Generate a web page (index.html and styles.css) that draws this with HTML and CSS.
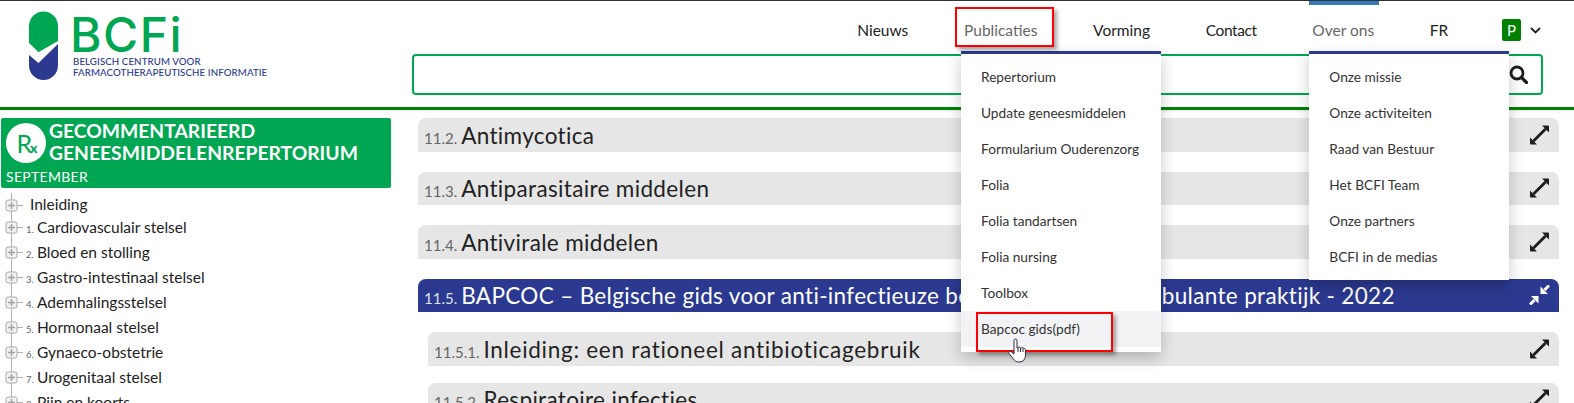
FILE: index.html
```html
<!DOCTYPE html>
<html lang="nl">
<head>
<meta charset="utf-8">
<title>BCFI</title>
<link rel="stylesheet" href="styles.css">
</head>
<body>
<div class="page">
  <header class="header">
    <a class="logo">
      <svg class="logo-mark" width="30" height="70" viewBox="0 0 30 70">
        <path fill="#00a651" d="M0 15A14.5 14.5 0 0 1 29 15V30L9.5 41 0 32Z"/>
        <path fill="#00a651" d="M0 31 9.5 41 29 29V15H0Z"/>
        <path fill="#2b3990" d="M0 44 9.5 52 29 33V54.500A14.500 14.500 0 0 1 0 54.500Z"/>
      </svg>
      <div class="logo-text">
        <div class="logo-name">BCFi</div>
        <div class="logo-sub">BELGISCH CENTRUM VOOR</div>
        <div class="logo-sub">FARMACOTHERAPEUTISCHE INFORMATIE</div>
      </div>
    </a>
    <div class="header-right">
      <nav class="nav">
        <a class="nav-item">Nieuws</a>
        <div class="nav-item nav-muted has-menu">
          <span>Publicaties</span>
          <ul class="menu">
            <li>Repertorium</li>
            <li>Update geneesmiddelen</li>
            <li>Formularium Ouderenzorg</li>
            <li>Folia</li>
            <li>Folia tandartsen</li>
            <li>Folia nursing</li>
            <li>Toolbox</li>
            <li class="menu-hover">Bapcoc gids(pdf)</li>
          </ul>
          <div class="mark mark-nav"></div>
        </div>
        <a class="nav-item">Vorming</a>
        <a class="nav-item nav-tight">Contact</a>
        <div class="nav-item nav-muted has-menu nav-open">
          <span>Over ons</span>
          <ul class="menu">
            <li>Onze missie</li>
            <li>Onze activiteiten</li>
            <li>Raad van Bestuur</li>
            <li>Het BCFI Team</li>
            <li>Onze partners</li>
            <li>BCFI in de medias</li>
          </ul>
        </div>
        <a class="nav-item">FR</a>
        <div class="user">
          <span class="user-badge">P</span>
          <svg width="11" height="7" viewBox="0 0 11 7"><path d="M1 1l4.500 4.500L10 1" fill="none" stroke="#222" stroke-width="1.800"/></svg>
        </div>
      </nav>
      <div class="search">
        <svg width="19" height="19" viewBox="0 0 19 19"><circle cx="8" cy="8" r="6" fill="none" stroke="#1d1d1d" stroke-width="2.800"/><path d="M12.500 12.500 17.500 17.500" stroke="#1d1d1d" stroke-width="3.200" stroke-linecap="round"/></svg>
      </div>
    </div>
  </header>

  <div class="body">
    <aside class="sidebar">
      <div class="rep">
        <div class="rep-head">
          <div class="rep-icon"><span class="rep-r">R</span><span class="rep-x">x</span></div>
          <div class="rep-title">GECOMMENTARIEERD<br>GENEESMIDDELENREPERTORIUM</div>
        </div>
        <div class="rep-month">SEPTEMBER</div>
      </div>
      <ul class="tree">
        <li class="tree-row tree-first"><svg class="tw" width="24" height="23" viewBox="0 0 24 23"><use href="#twig"/></svg><span class="tree-intro">Inleiding</span></li>
        <li class="tree-row"><svg class="tw" width="24" height="25" viewBox="0 0 24 25"><use href="#twig"/></svg><small>1.</small><span>Cardiovasculair stelsel</span></li>
        <li class="tree-row"><svg class="tw" width="24" height="25" viewBox="0 0 24 25"><use href="#twig"/></svg><small>2.</small><span>Bloed en stolling</span></li>
        <li class="tree-row"><svg class="tw" width="24" height="25" viewBox="0 0 24 25"><use href="#twig"/></svg><small>3.</small><span>Gastro-intestinaal stelsel</span></li>
        <li class="tree-row"><svg class="tw" width="24" height="25" viewBox="0 0 24 25"><use href="#twig"/></svg><small>4.</small><span>Ademhalingsstelsel</span></li>
        <li class="tree-row"><svg class="tw" width="24" height="25" viewBox="0 0 24 25"><use href="#twig"/></svg><small>5.</small><span>Hormonaal stelsel</span></li>
        <li class="tree-row"><svg class="tw" width="24" height="25" viewBox="0 0 24 25"><use href="#twig"/></svg><small>6.</small><span>Gynaeco-obstetrie</span></li>
        <li class="tree-row"><svg class="tw" width="24" height="25" viewBox="0 0 24 25"><use href="#twig"/></svg><small>7.</small><span>Urogenitaal stelsel</span></li>
        <li class="tree-row"><svg class="tw" width="24" height="25" viewBox="0 0 24 25"><use href="#twig"/></svg><small>8.</small><span>Pijn en koorts</span></li>
      </ul>
    </aside>

    <main class="main">
      <div class="bar"><span class="num">11.2.</span><span class="title">Antimycotica</span><svg class="ico" width="21" height="20" viewBox="0 0 20 20"><use href="#expand"/></svg></div>
      <div class="bar"><span class="num">11.3.</span><span class="title">Antiparasitaire middelen</span><svg class="ico" width="21" height="20" viewBox="0 0 20 20"><use href="#expand"/></svg></div>
      <div class="bar"><span class="num">11.4.</span><span class="title">Antivirale middelen</span><svg class="ico" width="21" height="20" viewBox="0 0 20 20"><use href="#expand"/></svg></div>
      <div class="bar bar-active"><span class="num">11.5.</span><span class="title">BAPCOC – Belgische gids voor anti-infectieuze behandeling in de ambulante praktijk - 2022</span><svg class="ico" width="21" height="20" viewBox="0 0 20 20"><use href="#compress"/></svg></div>
      <div class="bar bar-sub"><span class="num">11.5.1.</span><span class="title title-wide">Inleiding: een rationeel antibioticagebruik</span><svg class="ico" width="21" height="20" viewBox="0 0 20 20"><use href="#expand"/></svg></div>
      <div class="bar bar-sub"><span class="num">11.5.2.</span><span class="title">Respiratoire infecties</span><svg class="ico" width="21" height="20" viewBox="0 0 20 20"><use href="#expand"/></svg></div>
    </main>
  </div>

  <div class="mark mark-item"></div>
  <svg class="cursor" width="19" height="25" viewBox="0 0 19 25">
    <path d="M6 13V2.500a1.500 1.500 0 0 1 3 0V10l1-.2a1.300 1.300 0 0 1 2.500.3l1-.1a1.300 1.300 0 0 1 2.300.5c1.200-.2 1.700.5 1.700 1.500v5.500c0 3.500-2 6-5.500 6.500-3.500.3-5.500-1-7-3.500L1 15.500c-.8-1.500.8-3 2.200-1.800L6 16Z" fill="#fff" stroke="#2a2a3a" stroke-width="1"/>
    <path d="M10 10v4M12.500 10v4M15 10.500v3.500" stroke="#2a2a3a" stroke-width="1" fill="none"/>
  </svg>

  <svg class="defs" width="0" height="0">
    <defs>
      <g id="twig" fill="none">
        <path d="M11.500 0V25" stroke="#b0b0b0" stroke-width="1"/>
        <path d="M17 12.500H23" stroke="#b0b0b0" stroke-width="1"/>
        <rect x="6" y="7" width="11" height="11" rx="2" fill="#f2f2f2" stroke="#aaa" stroke-width="1"/>
        <path d="M8 12.500H15M11.500 9V16" stroke="#a0a0a0" stroke-width="1.500"/>
      </g>
      <g id="expand">
        <path d="M4 16 16 4" stroke="currentColor" stroke-width="2.800"/>
        <path d="M12.500 0.500H18.500A1 1 0 0 1 19.500 1.500V7.500Z M0.500 12.500V18.500A1 1 0 0 0 1.500 19.500H7.500Z" fill="currentColor"/>
      </g>
      <g id="compress">
        <path d="M15 5 19.500 0.500M5 15 0.500 19.500" stroke="currentColor" stroke-width="3"/>
        <path d="M11 1.500V9H18.500Z M9 18.500V11H1.500Z" fill="currentColor"/>
      </g>
    </defs>
  </svg>
</div>
</body>
</html>
```
FILE: styles.css
```css
* { box-sizing: border-box; }
html, body { margin: 0; padding: 0; }
body { background: #fff; color: #222; font-family: Lato, "Noto Sans", sans-serif; }
ul { list-style: none; margin: 0; padding: 0; }

.page { position: relative; width: 1574px; height: 403px; overflow: hidden; border-top: 1px solid #333; }

.header { height: 109px; display: flex; border-bottom: 3px solid #008000; box-shadow: 0 1px 3px rgba(0,0,0,.1); position: relative; z-index: 5; background: #fff; }

.logo { display: flex; width: 412px; padding: 10px 0 0 29px; gap: 14px; }
.logo-mark { flex: none; }
.logo-text { color: #2b3990; }
.logo-name { font-family: Inter, Lato, sans-serif; font-size: 48px; line-height: 44px; height: 45px; padding-top: 2px; color: #00a651; font-weight: 500; margin-left: -3px; letter-spacing: 1.500px; }
.logo-sub { font-family: Lato, sans-serif; font-size: 9.700px; line-height: 11px; font-weight: 500; letter-spacing: .1px; white-space: nowrap; }

.header-right { flex: 1; display: flex; flex-direction: column; padding-right: 31px; }

.nav { display: flex; justify-content: flex-end; align-items: center; height: 50px; gap: 49.700px; font-size: 15.500px; padding-right: 2px; }
.nav-item { position: relative; padding: 0 3px; line-height: 58px; color: #222; height: 50px; white-space: nowrap; }
.nav-tight { letter-spacing: -.4px; }
.nav-muted { color: #666; }
.nav-open::before { content: ""; position: absolute; left: 0; right: -2px; top: 0; height: 4px; background: #337ab7; }

.user { display: flex; align-items: center; gap: 9px; margin-left: 1px; padding-top: 8px; }
.user-badge { display: block; width: 19px; height: 22px; background: #008000; color: #fff; border-radius: 2px; font-size: 15px; line-height: 22px; text-align: center; }

.menu { position: absolute; left: 0; top: 50px; width: 200px; padding: 5px 0; background: #fff; border-top: 3px solid #2b3990; box-shadow: 0 6px 14px rgba(0,0,0,.22); z-index: 10; font-size: 13.700px; line-height: 36px; color: #333; }
.menu li { height: 36px; line-height: 36px; padding-left: 20px; white-space: nowrap; }
.menu-hover { background: #f2f3f5; }

.search { height: 41px; margin-top: 3px; border: 2px solid #00a651; border-radius: 4px; display: flex; align-items: center; justify-content: flex-end; padding-right: 13px; }

.body { display: grid; grid-template-columns: 418px 1fr; padding-right: 15px; }

.sidebar { padding: 8px 0 0 1px; width: 392px; }
.rep { width: 390px; height: 70px; background: #00a651; color: #fff; border-radius: 2px; padding: 5px 0 0 5px; }
.rep-head { display: flex; gap: 3px; height: 44px; }
.rep-icon { width: 40px; height: 40px; background: #fff; border-radius: 50%; color: #00a651; display: flex; justify-content: center; align-items: center; flex: none; padding-left: 2px; }
.rep-r { font-size: 25px; line-height: 25px; font-weight: 400; }
.rep-x { font-size: 14px; line-height: 14px; font-weight: 900; margin: 10px 0 0 -2px; }
.rep-title { font-size: 19.300px; line-height: 22px; font-weight: 700; white-space: nowrap; margin-top: -3px; }
.rep-month { font-size: 14px; line-height: 18px; letter-spacing: .3px; margin-top: 1px; }

.tree { margin: 5px 0 0 -1px; font-size: 15.500px; color: #222; }
.tree-row { height: 25px; display: flex; align-items: center; white-space: nowrap; }
.tree-row span { padding-bottom: 2px; }
.tree-first { height: 22px; }
.tree-first span { padding-bottom: 0; }
.tree-row small { font-size: 9.500px; color: #666; width: 13px; padding: 4px 0 0 2px; align-self: center; }
.tw { flex: none; }
.tree-first .tree-intro { padding-left: 6px; }

.main { padding-top: 8px; min-width: 0; }
.bar { position: relative; height: 33.500px; margin-bottom: 20px; background: #e6e6e6; border-radius: 8px 8px 0 0; display: flex; align-items: center; padding: 0 9px 0 6px; color: #222; white-space: nowrap; }
.bar-sub { margin-left: 10px; margin-bottom: 17px; }
.bar-active { background: #2b3990; color: #fff; }
.num { font-size: 15px; color: #666; padding-top: 6px; margin-right: 4px; }
.bar-active .num { color: #dfe2f3; }
.title { font-size: 22.500px; flex: 1; letter-spacing: .34px; padding-top: 1px; }
.title-wide { letter-spacing: .72px; }
.ico { flex: none; color: #1d1d1d; }
.bar-active .ico { color: #fff; }

.mark { position: absolute; border: 2px solid #f00; box-shadow: 3px 3px 4px rgba(0,0,0,.35); pointer-events: none; z-index: 20; }
.mark-nav { left: -6px; top: 6px; width: 99px; height: 40px; }
.mark-item { left: 976px; top: 311px; width: 137px; height: 40px; }
.cursor { position: absolute; left: 1008px; top: 337px; z-index: 21; }
.defs { position: absolute; }
```
